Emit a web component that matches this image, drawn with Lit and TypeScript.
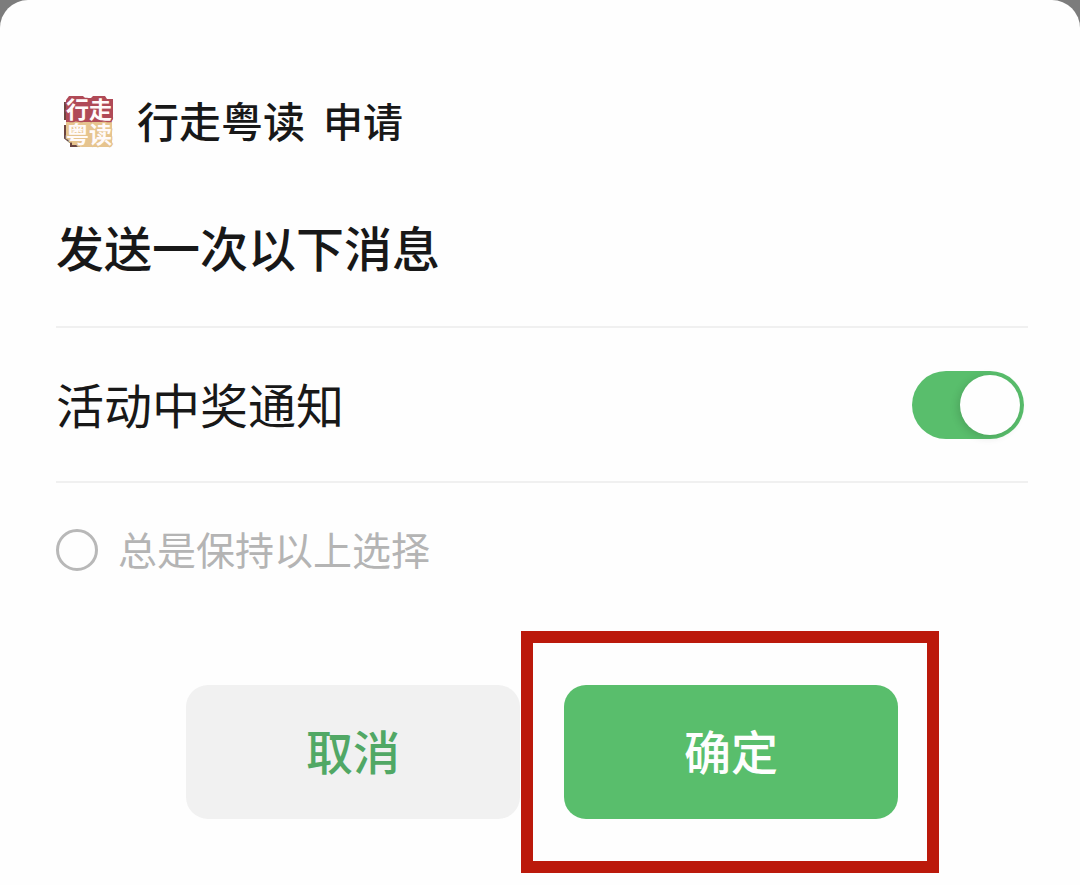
import { LitElement, html, css } from "lit";
import { customElement, state } from "lit/decorators.js";

@customElement("app-logo")
export class AppLogo extends LitElement {
  static styles = css`
    :host {
      display: block;
      width: 56px;
      height: 60px;
    }
    .art {
      display: block;
      width: 100%;
      height: 100%;
      font-family: "Noto Sans CJK SC", sans-serif;
      font-weight: 700;
      font-size: 23px;
    }
    .word {
      fill: #fffafa;
      stroke-width: 3px;
      stroke-linejoin: round;
      paint-order: stroke;
    }
    .red {
      stroke: #b04a57;
    }
    .gold {
      stroke: #e6c48f;
    }
  `;

  render() {
    return html`
      <svg class="art" viewBox="0 0 56 60" role="img" aria-label="行走粤读">
        <path
          d="M5 13v18M5 36v13l5 4h1v4h9"
          fill="none"
          stroke="#6b4540"
          stroke-width="2"
        />
        <path d="M9 7h14l2 2h6l2-2h12l2 3h6v20l-2 3H6V11z" fill="#b04a57" />
        <path d="M6 33h46v24l-2 1H22l-3-2h-7v-4l-6-4z" fill="#e6c48f" />
        <text class="word">
          <tspan class="red" x="6" y="29">行走</tspan>
          <tspan class="gold" x="6" y="54">粤读</tspan>
        </text>
      </svg>
    `;
  }
}

@customElement("app-root")
export class AppRoot extends LitElement {
  static styles = css`
    :host {
      display: block;
      min-height: 100vh;
      background: #7c7c7c;
      font-family: "Noto Sans CJK SC", sans-serif;
      color: #181818;
    }
    * {
      box-sizing: border-box;
    }
    .sheet {
      min-height: 100vh;
      padding: 88px 52px 66px 56px;
      background: #fefefe;
      border-radius: 28px 28px 0 0;
    }
    .source {
      display: flex;
      align-items: center;
      gap: 21px;
      padding-left: 4px;
      font-weight: 500;
      line-height: 60px;
    }
    .request {
      display: flex;
      align-items: center;
      gap: 18px;
      padding-top: 2px;
    }
    .name {
      font-size: 42px;
    }
    .verb {
      font-size: 40px;
    }
    .title {
      margin: 0;
      padding: 66px 0 50px;
      border-bottom: 2px solid #f0f0f0;
      font-size: 48px;
      font-weight: 500;
      line-height: 60px;
    }
    .row {
      display: flex;
      align-items: center;
      justify-content: space-between;
      padding: 47px 4px 46px 0;
      border-bottom: 2px solid #f0f0f0;
      font-size: 48px;
    }
    .row label,
    .keep label {
      padding-bottom: 4px;
      line-height: 56px;
    }
    .switch {
      appearance: none;
      display: flex;
      align-items: center;
      justify-content: flex-end;
      width: 112px;
      height: 68px;
      margin: -4px 0;
      padding: 4px;
      border-radius: 34px;
      background: #59be6c;
    }
    .switch::before {
      content: "";
      width: 60px;
      height: 60px;
      border-radius: 50%;
      background: #fefefe;
      box-shadow: -2px 2px 8px rgba(0, 0, 0, 0.14);
    }
    .switch:not(:checked) {
      justify-content: flex-start;
      background: #dcdcdc;
    }
    .keep {
      display: flex;
      align-items: center;
      gap: 20px;
      padding-top: 37px;
      font-size: 39px;
      color: #b4b4b4;
    }
    .tick {
      appearance: none;
      width: 42px;
      height: 42px;
      margin: 0;
      border: 3px solid #b8b8b8;
      border-radius: 50%;
    }
    .tick:checked {
      border-color: #59be6c;
      background: #59be6c;
    }
    .actions {
      display: flex;
      justify-content: center;
      gap: 44px;
      padding-top: 105px;
    }
    .button {
      width: 334px;
      padding: 35px 0 39px;
      border: 0;
      border-radius: 22px;
      font-family: inherit;
      font-size: 47px;
      font-weight: 500;
      line-height: 60px;
    }
    .cancel {
      background: #f1f1f1;
      color: #51a865;
    }
    .confirm {
      background: #59be6c;
      color: #fefefe;
    }
    .marked {
      position: relative;
    }
    .marked::after {
      content: "";
      position: absolute;
      inset: -54px -41px -54px -43px;
      border: 12px solid #bb190b;
      pointer-events: none;
    }
  `;

  @state() private notify = true;
  @state() private keep = false;

  render() {
    return html`
      <main class="sheet">
        <div class="source">
          <app-logo></app-logo>
          <div class="request">
            <span class="name">行走粤读</span>
            <span class="verb">申请</span>
          </div>
        </div>
        <h1 class="title">发送一次以下消息</h1>
        <div class="row">
          <label for="notify">活动中奖通知</label>
          <input
            id="notify"
            class="switch"
            type="checkbox"
            role="switch"
            .checked=${this.notify}
            @change=${(e: Event) => (this.notify = (e.target as HTMLInputElement).checked)}
          />
        </div>
        <div class="keep">
          <input
            id="keep"
            class="tick"
            type="checkbox"
            .checked=${this.keep}
            @change=${(e: Event) => (this.keep = (e.target as HTMLInputElement).checked)}
          />
          <label for="keep">总是保持以上选择</label>
        </div>
        <div class="actions">
          <button class="button cancel" type="button">取消</button>
          <div class="marked">
            <button class="button confirm" type="button">确定</button>
          </div>
        </div>
      </main>
    `;
  }
}
